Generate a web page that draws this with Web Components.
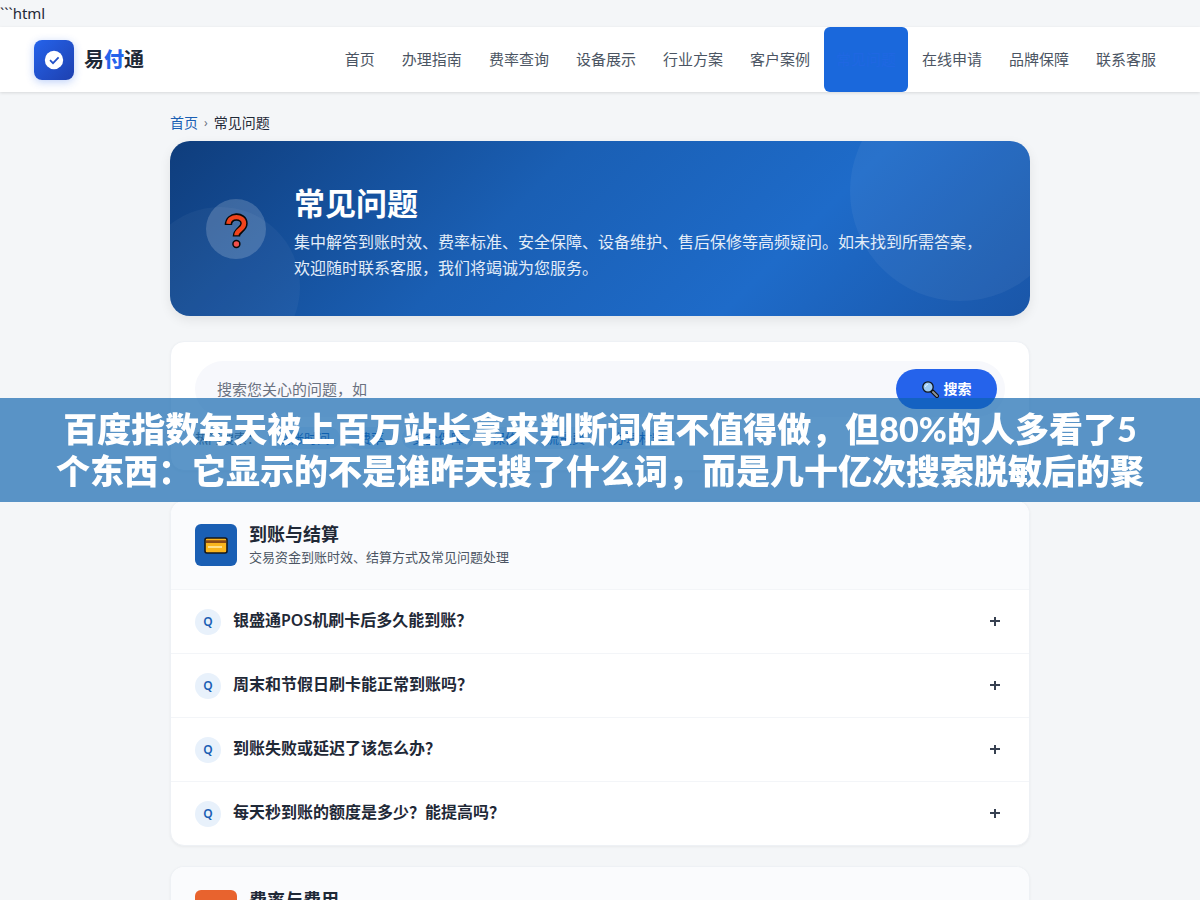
<!DOCTYPE html>
<html lang="zh-CN">
<head>
<meta charset="utf-8">
<meta name="viewport" content="width=device-width, initial-scale=1">
<title>常见问题 - 易付通</title>
<style>
  body {
    margin: 0;
    background: #f4f6f8;
    color: #1f2937;
    font: 15px/27px "Noto Sans", "Noto Sans CJK SC", sans-serif;
  }
</style>
</head>
<body>
<faq-page></faq-page>
<script>
const define = (name, css, html) => {
  const template = document.createElement('template');
  template.innerHTML = `<style>*{box-sizing:border-box}:host{display:block}${css}</style>${html}`;
  customElements.define(name, class extends HTMLElement {
    constructor() {
      super();
      this.attachShadow({ mode: 'open' }).append(template.content.cloneNode(true));
    }
  });
};

define('site-logo', `
  a { display: flex; align-items: center; gap: 10px; color: #1f2937; text-decoration: none; font-size: 20px; font-weight: 700; }
  .mark { display: grid; place-items: center; width: 40px; height: 40px; border-radius: 8px; background: linear-gradient(135deg, #2563eb, #1e40af); box-shadow: 0 2px 8px #2563eb4d; }
  b { color: #2563eb; }
`, `
  <a href="#"><span class="mark"><svg width="20" height="20" viewBox="0 0 20 20"><circle cx="10" cy="10" r="9.2" fill="#fff"/><path d="M6 10.2l3 3 5.6-5.8" fill="none" stroke="#2150c8" stroke-width="1.7"/></svg></span><span>易<b>付</b>通</span></a>
`);

define('nav-link', `
  a { display: flex; align-items: center; height: 65px; padding: 0 13px; border-radius: 6px; color: #4b5563; text-decoration: none; white-space: nowrap; }
  :host([active]) a { padding: 0 12px; background: #1a68dc; color: #1f67e2; }
`, `<a href="#"><slot></slot></a>`);

define('site-header', `
  :host { background: #fff; box-shadow: 0 1px 3px #0000001f; }
  header { display: flex; justify-content: space-between; align-items: center; height: 65px; padding: 0 31px 0 34px; }
  nav { display: flex; gap: 1px; }
`, `
  <header><site-logo></site-logo>
  <nav><nav-link>首页</nav-link><nav-link>办理指南</nav-link><nav-link>费率查询</nav-link><nav-link>设备展示</nav-link><nav-link>行业方案</nav-link><nav-link>客户案例</nav-link><nav-link active>常见问题</nav-link><nav-link>在线申请</nav-link><nav-link>品牌保障</nav-link><nav-link>联系客服</nav-link></nav></header>
`);

define('bread-crumb', `
  nav { display: flex; gap: 6px; padding: 19px 0 6px; font-size: 14px; line-height: 24px; }
  a { color: #1a5fb4; text-decoration: none; }
  i { font-style: normal; font-size: 12px; color: #6b7280; }
`, `<nav><a href="#">首页</a><i>›</i><span>常见问题</span></nav>`);

define('page-hero', `
  :host { position: relative; overflow: hidden; border-radius: 20px; background: linear-gradient(135deg, #0f3d7c 0%, #1a5fb4 40%, #1e6bc9 70%, #1a56a8 100%); color: #fff; }
  :host { box-shadow: 0 4px 12px #00000014; }
  .orb { position: absolute; border-radius: 50%; }
  .a { width: 220px; height: 220px; top: -60px; right: -40px; background: #ffffff0d; }
  .b { width: 160px; height: 160px; bottom: -51px; left: -30px; background: #ffffff0a; }
  .in { position: relative; display: flex; align-items: center; gap: 28px; padding: 36px 36px 35px; }
  .icon { flex: none; display: grid; place-items: center; width: 60px; height: 60px; border-radius: 50%; background: #ffffff2e; }
  h1 { margin: 0; font-size: 31px; line-height: 52px; font-weight: 700; }
  p { margin: 0; font-size: 16px; line-height: 26px; color: #e4edf8; }
`, `
  <span class="orb a"></span><span class="orb b"></span>
  <div class="in"><span class="icon"><svg width="26" height="40" viewBox="0 0 26 40"><path d="M5.4 16C5.4 5.600 21 5.500 21 14.500c0 6-7.600 6.500-7.600 13" fill="none" stroke="#090909" stroke-width="7.400"/><circle cx="13.400" cy="35" r="4.200" fill="#090909"/><path d="M5.400 14.800C6 5.800 21 6 21 14.500c0 6-7.600 6.500-7.600 11.800" fill="none" stroke="#f0441c" stroke-width="4.400"/><circle cx="13.400" cy="35" r="2.700" fill="#f0504b"/></svg></span>
  <div><h1>常见问题</h1><p>集中解答到账时效、费率标准、安全保障、设备维护、售后保修等高频疑问。如未找到所需答案，欢迎随时联系客服，我们将竭诚为您服务。</p></div></div>
`);

define('search-panel', `
  :host { margin: 25px 0 29px; padding: 19px 24px 21px; border: 1px solid #eef1f5; border-radius: 14px; background: #fff; box-shadow: 0 1px 3px #0000000a; }
  form { display: flex; align-items: center; gap: 8px; padding: 8px 8px 8px 22px; border-radius: 28px; background: #f7f8fc; }
  input { flex: 1; min-width: 0; padding: 0; border: 0; background: none; outline: 0; font: inherit; color: inherit; }
  input::placeholder { color: #6b7280; }
  button { display: flex; align-items: center; justify-content: center; gap: 5px; width: 101px; height: 40px; padding: 0; border: 0; border-radius: 20px; background: #2563eb; color: #fff; font: 700 14px/20px "Noto Sans", "Noto Sans CJK SC", sans-serif; }
  .tags { display: flex; align-items: center; gap: 8px; margin-top: 10px; font-size: 13px; line-height: 22px; color: #5a6878; }
  a { padding: 0 10px; border-radius: 11px; background: #e8f1fb; color: #1a5fb4; text-decoration: none; }
`, `
  <form><input type="search" aria-label="搜索问题" placeholder="搜索您关心的问题，如"><button type="button"><svg width="17" height="17" viewBox="0 0 17 17"><path d="M10 10l5 5" stroke="#111" stroke-width="4" stroke-linecap="round"/><path d="M11 11l4 4" stroke="#8b9299" stroke-width="2" stroke-linecap="round"/><circle cx="6" cy="6" r="5.2" fill="#9ccbf4" stroke="#10151c" stroke-width="1.3"/><path d="M3.4 6a2.7 2.7 0 0 1 2.6-2.6" fill="none" stroke="#e0f2ff"/></svg>搜索</button></form>
  <div class="tags"><span>热门搜索：</span><a href="#">到账时间</a><a href="#">费率</a><a href="#">安全保障</a><a href="#">保修</a><a href="#">流量费</a><a href="#">办理材料</a></div>
`);

define('faq-item', `
  :host { border-top: 1px solid #f3f5f8; }
  button { display: flex; align-items: center; gap: 12px; width: 100%; height: 63px; padding: 0 29px 0 24px; border: 0; background: none; color: #1f2937; font: 600 16px/24px "Noto Sans", "Noto Sans CJK SC", sans-serif; text-align: left; }
  .q { flex: none; width: 26px; height: 26px; border-radius: 50%; background: #e8f1fb; color: #1a5fb4; font-size: 12px; line-height: 26px; text-align: center; }
  .t { flex: 1; padding-bottom: 3px; }
  svg { flex: none; }
`, `<button type="button"><span class="q">Q</span><span class="t"><slot></slot></span><svg width="10" height="10" viewBox="0 0 10 10"><path d="M0 4h10M5 -1v10" stroke="#374151" stroke-width="2"/></svg></button>`);

define('faq-group', `
  :host { margin-bottom: 20px; border: 1px solid #eef1f5; border-radius: 14px; overflow: hidden; background: #fff; box-shadow: 0 1px 3px #0000000d; }
  header { display: flex; gap: 12px; padding: 23px 24px 19px; background: #fafbfd; }
  .icon { display: grid; place-items: center; width: 42px; height: 42px; border-radius: 6px; background: var(--tone, #1a5fb4); }
  h2 { margin: 0; font-size: 18px; line-height: 20px; font-weight: 700; }
  p { margin: 0; font-size: 13px; line-height: 26px; color: #4b5563; }
`, `
  <header><span class="icon"><slot name="icon"></slot></span><div><h2><slot name="title"></slot></h2><p><slot name="note"></slot></p></div></header>
  <slot></slot>
`);

define('headline-banner', `
  :host { position: fixed; left: 0; right: 0; top: 50%; transform: translateY(-50%); z-index: 5; padding: 10px 0; background: rgba(12, 98, 173, .67); color: #fff; text-align: center; }
  p { margin: 0; font: 900 34px/42px Lato, "Noto Sans CJK SC", sans-serif; }
`, `<p>百度指数每天被上百万站长拿来判断词值不值得做，但80%的人多看了5<br>个东西：它显示的不是谁昨天搜了什么词，而是几十亿次搜索脱敏后的聚</p>`);

define('faq-page', `
  main { max-width: 860px; margin: 0 auto; }
`, `
  <div>\`\`\`html</div>
  <site-header></site-header>
  <main>
    <bread-crumb></bread-crumb>
    <page-hero></page-hero>
    <search-panel></search-panel>
    <faq-group>
      <svg slot="icon" width="24" height="18" viewBox="0 0 24 18"><rect x="1" y="2" width="22" height="15" rx="2" fill="#f9b51e" stroke="#15181c" stroke-width="1.6"/><path d="M2 5.6h20" stroke="#8b4a16" stroke-width="2.6"/><path d="M4 11h14" stroke="#ffe08a" stroke-width="2"/></svg>
      <span slot="title">到账与结算</span><span slot="note">交易资金到账时效、结算方式及常见问题处理</span>
      <faq-item>银盛通POS机刷卡后多久能到账？</faq-item>
      <faq-item>周末和节假日刷卡能正常到账吗？</faq-item>
      <faq-item>到账失败或延迟了该怎么办？</faq-item>
      <faq-item>每天秒到账的额度是多少？能提高吗？</faq-item>
    </faq-group>
    <faq-group style="--tone:#e8632e">
      <span slot="title">费率与费用</span>
    </faq-group>
  </main>
  <headline-banner></headline-banner>
`);
</script>
</body>
</html>
